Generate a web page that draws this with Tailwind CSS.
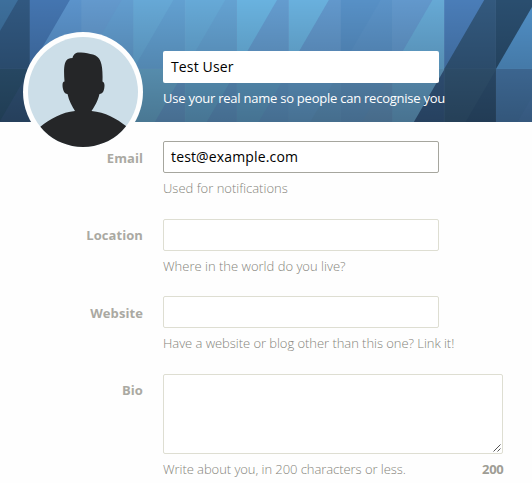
<!DOCTYPE html>
<html lang="en">
<head>
<meta charset="utf-8">
<title>Profile settings</title>
<script src="https://cdn.jsdelivr.net/npm/@tailwindcss/browser@4"></script>
</head>
<body class="bg-[#fefefe] w-[532px] h-[483px] overflow-hidden font-['Open_Sans',sans-serif] text-[13px] leading-[18px] text-[#85847b]">
<header class="relative h-[122px] pl-[163px] pt-[51px]">
  <svg class="absolute inset-0" width="532" height="122" viewBox="0 0 532 122">
    <defs><linearGradient id="shade" x1="0" y1="0" x2="0" y2="1"><stop offset="0" stop-color="#000" stop-opacity="0"/><stop offset="1" stop-color="#000" stop-opacity=".28"/></linearGradient></defs>
    <g id="cells"></g>
    <rect width="532" height="122" fill="url(#shade)"/>
  </svg>
  <svg class="absolute left-[23px] top-[32px]" width="120" height="120" viewBox="0 0 120 120">
    <defs><clipPath id="disc"><circle cx="60" cy="60" r="55"/></clipPath></defs>
    <circle cx="60" cy="60" r="60" fill="#fefefe"/>
    <circle cx="60" cy="60" r="55" fill="#ccdee8"/>
    <path clip-path="url(#disc)" fill="#252628" d="M52 79C49 74 46 69 44.500 62C41 62 39.500 57 39.500 53Q39.500 49.500 41.500 49.500C40.500 37 41 29 45 27Q47 26 49.500 26C50.500 22 53 20.500 56 20.500C61 20 66 21.500 70 22.500C78 25 80 32 79.500 49.500Q81.500 50 81.500 53C81.500 58 80 62 76.500 62C75 69 71 75 68.500 79C82 80 94 87 103 94V120H17V95C27 87 39 80 52 79Z"/>
  </svg>
  <div class="relative flex h-8 w-[276px] items-center rounded-[2px] bg-white px-2 text-[14px] tracking-[0.15px] text-black">Test User</div>
  <p class="relative mt-[6px] text-white tracking-[-0.24px]">Use your real name so people can recognise you</p>
</header>
<main class="pt-[19px]">
  <section class="flex h-[78px] gap-5">
    <label class="w-[143px] pt-[8px] text-right font-bold tracking-[0.08px] text-[#aaa9a2]">Email</label>
    <div><div class="flex h-8 w-[276px] items-center rounded-[2px] border border-[#a6a69e] bg-white px-[7px] text-[14px] tracking-[0.15px] text-black">test@example.com</div><p class="mt-[6px] font-light">Used for notifications</p></div>
  </section>
  <section class="flex h-[77px] gap-5">
    <label class="w-[143px] pt-[7px] text-right font-bold tracking-[0.08px] text-[#aaa9a2]">Location</label>
    <div><div class="h-8 w-[276px] rounded-[2px] border border-[#deded2] bg-white"></div><p class="mt-[6px] font-light">Where in the world do you live?</p></div>
  </section>
  <section class="flex h-[78px] gap-5">
    <label class="w-[143px] pt-[8px] text-right font-bold tracking-[0.08px] text-[#aaa9a2]">Website</label>
    <div><div class="h-8 w-[276px] rounded-[2px] border border-[#deded2] bg-white"></div><p class="mt-[6px] font-light tracking-[-0.05px]">Have a website or blog other than this one? Link it!</p></div>
  </section>
  <section class="flex gap-5">
    <label class="w-[143px] pt-[7px] text-right font-bold tracking-[0.08px] text-[#aaa9a2]">Bio</label>
    <div class="w-[340px]">
      <div class="flex h-20 items-end justify-end rounded-[2px] border border-[#deded2] bg-white p-[1px]"><svg width="8" height="8" viewBox="0 0 8 8" stroke="#555" stroke-width="1"><path d="M.5 7.500L7.500.5M4.500 7.500L7.500 4.500"/></svg></div>
      <div class="mt-[6px] flex justify-between"><p class="font-light tracking-[-0.06px]">Write about you, in 200 characters or less.</p><b class="-mr-[0.5px] font-bold tracking-[-0.3px] text-[#9e9d95]">200</b></div>
    </div>
  </section>
</main>
<script>
// Each row: [top y, [upper-left colour, lower-right colour] for every 52px column]
const rows = [
  [-21, [['#3d6f9c','#315880'],['#4475b0','#5b93cb'],['#6399cd','#629dcf'],['#66a8d6','#62a0d1'],['#66a9d7','#64a2d2'],['#69b2df','#649ccf'],['#69b0dd','#6298cc'],['#5790c6','#5b93c8'],['#6298cc','#66a9d5'],['#4a7db8','#33597e'],['#2a4e6f','#5190c7']]],
  [69, [['#2d5474','#34587f'],['#34587f','#34587f'],['#63a4c8','#63a4c8'],['#66a6cc','#6298c8'],['#62a2cc','#5f96c6'],['#609fca','#6098c8'],['#629ccb','#6098c4'],['#5f94c2','#6294bf'],['#649fc8','#355a84'],['#34597a','#2f5376'],['#4778aa','#4a7aae']]]
];
document.getElementById('cells').innerHTML = rows.map(([y, cols]) => cols.map(([a, b], i) => {
  const x = -22 + i * 51.8, r = x + 51.8, m = y + 90;
  return `<rect x="${x}" y="${y}" width="52.3" height="90" fill="${a}"/><path d="M${r + .4} ${y}V${m}H${x}Z" fill="${b}"/><path d="M${r} ${y}V${m}H${x}" fill="none" stroke="#fff" stroke-opacity=".04"/>`;
}).join('')).join('');
</script>
</body>
</html>
